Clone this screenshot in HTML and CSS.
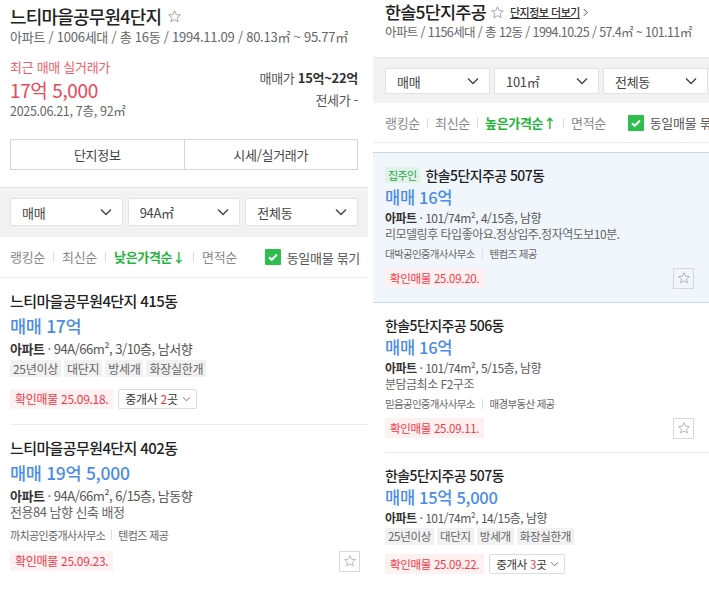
FILE: index.html
```html
<!DOCTYPE html>
<html lang="ko">
<head>
<meta charset="utf-8">
<title>단지 매물</title>
<link rel="stylesheet" href="styles.css">
</head>
<body>
<svg width="0" height="0" class="defs">
  <defs>
    <symbol id="star" viewBox="0 0 24 24"><path d="M12 2.8l2.7 6.1 6.6.6-5 4.4 1.5 6.5L12 17l-5.8 3.4 1.5-6.5-5-4.4 6.6-.6z" fill="none" stroke="currentColor" stroke-width="1.4" stroke-linejoin="round"/></symbol>
    <symbol id="chev" viewBox="0 0 12 8"><path d="M1 1.5l5 5 5-5" fill="none" stroke="currentColor" stroke-width="1.4"/></symbol>
    <symbol id="chev-s" viewBox="0 0 10 6"><path d="M1 1l4 4 4-4" fill="none" stroke="currentColor" stroke-width="1"/></symbol>
  </defs>
</svg>
<div class="page">
  <section class="panel panel-left">
    <header class="cx-head">
      <h1 class="cx-title">느티마을공무원4단지 <svg class="title-star"><use href="#star"/></svg></h1>
      <p class="cx-sub">아파트 / 1006세대 / 총 16동 / 1994.11.09 / 80.13㎡ ~ 95.77㎡</p>
      <div class="cx-price">
        <div class="recent">
          <p class="recent-label">최근 매매 실거래가</p>
          <p class="recent-value">17억 5,000</p>
          <p class="recent-meta">2025.06.21, 7층, 92㎡</p>
        </div>
        <div class="range">
          <p class="range-row">매매가 <b>15억~22억</b></p>
          <p class="range-row">전세가 -</p>
        </div>
      </div>
      <div class="tabs"><span class="tab">단지정보</span><span class="tab">시세/실거래가</span></div>
    </header>
    <div class="filters">
      <div class="select">매매<svg class="chev"><use href="#chev"/></svg></div>
      <div class="select">94A㎡<svg class="chev"><use href="#chev"/></svg></div>
      <div class="select">전체동<svg class="chev"><use href="#chev"/></svg></div>
    </div>
    <div class="sort">
      <span class="sort-item">랭킹순</span><i class="sep"></i>
      <span class="sort-item">최신순</span><i class="sep"></i>
      <span class="sort-item active">낮은가격순↓</span><i class="sep"></i>
      <span class="sort-item">면적순</span>
      <label class="check"><span class="box"><svg viewBox="0 0 16 16"><path d="M4 8.2l2.7 2.6L12 5.5" fill="none" stroke="#fff" stroke-width="2"/></svg></span>동일매물 묶기</label>
    </div>
    <ul class="list">
      <li class="item">
        <p class="item-title">느티마을공무원4단지 415동</p>
        <p class="item-price">매매 17억</p>
        <p class="item-info"><b>아파트</b> · 94A/66m², 3/10층, 남서향</p>
        <p class="tags"><span class="tag">25년이상</span><span class="tag">대단지</span><span class="tag">방세개</span><span class="tag">화장실한개</span></p>
        <div class="item-foot"><span class="badge">확인매물 25.09.18.</span><span class="broker">중개사 <em>2</em>곳<svg class="chev-s"><use href="#chev-s"/></svg></span></div>
      </li>
      <li class="item">
        <p class="item-title">느티마을공무원4단지 402동</p>
        <p class="item-price">매매 19억 5,000</p>
        <p class="item-info"><b>아파트</b> · 94A/66m², 6/15층, 남동향</p>
        <p class="item-desc">전용84 남향 신축 배정</p>
        <p class="item-agent">까치공인중개사사무소<i class="sep"></i>텐컴즈 제공</p>
        <div class="item-foot"><span class="badge">확인매물 25.09.23.</span><span class="fav"><svg><use href="#star"/></svg></span></div>
      </li>
    </ul>
  </section>

  <section class="panel panel-right">
    <header class="cx-head">
      <h1 class="cx-title">한솔5단지주공 <svg class="title-star"><use href="#star"/></svg><a class="more">단지정보 더보기<svg class="more-chev" viewBox="0 0 6 10"><path d="M1 1l4 4-4 4" fill="none" stroke="currentColor" stroke-width="1.1"/></svg></a></h1>
      <p class="cx-sub">아파트 / 1156세대 / 총 12동 / 1994.10.25 / 57.4㎡ ~ 101.11㎡</p>
    </header>
    <div class="filters">
      <div class="select">매매<svg class="chev"><use href="#chev"/></svg></div>
      <div class="select">101㎡<svg class="chev"><use href="#chev"/></svg></div>
      <div class="select">전체동<svg class="chev"><use href="#chev"/></svg></div>
    </div>
    <div class="sort">
      <span class="sort-item">랭킹순</span><i class="sep"></i>
      <span class="sort-item">최신순</span><i class="sep"></i>
      <span class="sort-item active">높은가격순↑</span><i class="sep"></i>
      <span class="sort-item">면적순</span>
      <label class="check"><span class="box"><svg viewBox="0 0 16 16"><path d="M4 8.2l2.7 2.6L12 5.5" fill="none" stroke="#fff" stroke-width="2"/></svg></span>동일매물 묶기</label>
    </div>
    <ul class="list">
      <li class="item item-owner">
        <p class="item-title"><span class="owner">집주인</span>한솔5단지주공 507동</p>
        <p class="item-price">매매 16억</p>
        <p class="item-info"><b>아파트</b> · 101/74m², 4/15층, 남향</p>
        <p class="item-desc">리모델링후 타입좋아요.정상입주.정자역도보10분.</p>
        <p class="item-agent">대박공인중개사사무소<i class="sep"></i>텐컴즈 제공</p>
        <div class="item-foot"><span class="badge">확인매물 25.09.20.</span><span class="fav"><svg><use href="#star"/></svg></span></div>
      </li>
      <li class="item">
        <p class="item-title">한솔5단지주공 506동</p>
        <p class="item-price">매매 16억</p>
        <p class="item-info"><b>아파트</b> · 101/74m², 5/15층, 남향</p>
        <p class="item-desc">분담금최소 F2구조</p>
        <p class="item-agent">믿음공인중개사사무소<i class="sep"></i>매경부동산 제공</p>
        <div class="item-foot"><span class="badge">확인매물 25.09.11.</span><span class="fav"><svg><use href="#star"/></svg></span></div>
      </li>
      <li class="item">
        <p class="item-title">한솔5단지주공 507동</p>
        <p class="item-price">매매 15억 5,000</p>
        <p class="item-info"><b>아파트</b> · 101/74m², 14/15층, 남향</p>
        <p class="tags"><span class="tag">25년이상</span><span class="tag">대단지</span><span class="tag">방세개</span><span class="tag">화장실한개</span></p>
        <div class="item-foot"><span class="badge">확인매물 25.09.22.</span><span class="broker">중개사 <em>3</em>곳<svg class="chev-s"><use href="#chev-s"/></svg></span></div>
      </li>
    </ul>
  </section>
</div>
</body>
</html>
```

FILE: styles.css
```css
* { box-sizing: border-box; }
html, body { margin: 0; padding: 0; background: #fff; }
body {
  font-family: "Noto Sans CJK KR", "Noto Sans", sans-serif;
  color: #222;
  font-size: 13px;
  letter-spacing: -0.3px;
}
p, h1, ul { margin: 0; padding: 0; }
ul { list-style: none; }
.defs { position: absolute; width: 0; height: 0; overflow: hidden; }

.page {
  display: flex;
  gap: 5px;
  width: 709px;
  height: 591px;
  overflow: hidden;
}
.panel { flex: none; overflow: hidden; }
.panel-left { width: 368px; }
.panel-right { width: 336px; }

/* header */
.cx-head { padding: 0 10px; }
.cx-title {
  display: flex;
  align-items: center;
  height: 28px;
  padding-top: 4px;
  font-size: 18px;
  font-weight: 500;
  line-height: 24px;
  letter-spacing: -0.8px;
  color: #222;
}
.title-star { width: 15px; height: 15px; color: #999; margin-left: 6px; flex: none; }
.cx-sub {
  font-size: 13px;
  color: #666;
  line-height: 18px;
  letter-spacing: -0.25px;
}
.cx-price {
  display: flex;
  justify-content: space-between;
  margin-top: 12px;
}
.recent-label { color: #f0606c; font-size: 13px; line-height: 18px; }
.recent-value { color: #ec4657; font-size: 19px; line-height: 24px; margin-top: 2px; letter-spacing: -0.4px; }
.recent-meta { color: #666; font-size: 12.5px; line-height: 18px; }
.range { text-align: right; padding-top: 11px; }
.range-row { font-size: 13px; color: #555; line-height: 18px; margin-bottom: 4px; }
.range-row b { font-weight: 700; color: #333; }
.tabs {
  display: flex;
  margin-top: 19px;
  border: 1px solid #d6d6d6;
  height: 31px;
}
.tab {
  flex: 1;
  display: flex;
  align-items: center;
  justify-content: center;
  font-size: 13px;
  color: #444;
}
.tab + .tab { border-left: 1px solid #d6d6d6; }

/* filters */
.filters {
  display: flex;
  gap: 5px;
  background: #f2f2f2;
  border-top: 1px solid #e6e6e6;
  padding: 10px 10px 11px;
  margin-top: 17px;
}
.select {
  flex: 1;
  height: 28px;
  background: #fff;
  border: 1px solid #e2e2e2;
  display: flex;
  align-items: center;
  justify-content: space-between;
  padding: 0 10px 0 11px;
  font-size: 13px;
  color: #444;
}
.chev { width: 12px; height: 8px; color: #444; flex: none; }

/* sort */
.sort {
  display: flex;
  align-items: center;
  height: 41px;
  padding: 0 8px 0 10px;
  border-bottom: 1px solid #ececec;
  font-size: 13px;
  color: #888;
}
.sort-item { line-height: 18px; white-space: nowrap; }
.sort-item.active { color: #22b43c; font-weight: 700; }
.sep {
  display: inline-block;
  flex: none;
  width: 1px;
  height: 10px;
  background: #ddd;
  margin: 0 8px;
}
.check {
  margin-left: auto;
  display: flex;
  align-items: center;
  color: #555;
  white-space: nowrap;
}
.box {
  width: 16px;
  height: 16px;
  background: #2dbe4e;
  border-radius: 1px;
  margin-right: 6px;
  display: flex;
  flex: none;
}
.box svg { width: 16px; height: 16px; }

/* items */
.item {
  margin-left: 10px;
  padding: 13px 8px 14px 0;
  border-bottom: 1px solid #ececec;
}
.item:last-child { border-bottom: 0; }
.item-title {
  display: flex;
  align-items: center;
  font-size: 15px;
  font-weight: 500;
  line-height: 20px;
  letter-spacing: -0.6px;
  color: #222;
}
.item-price {
  color: #4b8ce8;
  font-size: 17.5px;
  font-weight: 500;
  line-height: 24px;
  margin-top: 3px;
  letter-spacing: -0.3px;
}
.item-info {
  font-size: 13px;
  color: #555;
  line-height: 16px;
  margin-top: 3px;
  letter-spacing: -0.5px;
}
.item-info b { font-weight: 700; color: #333; }
.item-desc { font-size: 13px; color: #666; line-height: 16px; letter-spacing: -0.5px; }
.item-agent {
  display: flex;
  align-items: center;
  font-size: 11px;
  color: #666;
  line-height: 16px;
  margin-top: 7px;
  letter-spacing: -0.6px;
}
.item-agent .sep { margin: 0 6px; }
.tags { display: flex; align-items: flex-start; gap: 3px; margin-top: 3px; height: 18px; }
.tag {
  background: #f1f1f1;
  color: #666;
  font-size: 12px;
  line-height: 17px;
  padding: 0 3px;
}
.item-foot {
  display: flex;
  align-items: center;
  gap: 5px;
  margin-top: 7px;
  height: 22px;
}
.tags + .item-foot { margin-top: 10px; }
.badge {
  background: #fff0f1;
  color: #f03a4a;
  font-size: 12px;
  line-height: 20px;
  padding: 0 5px;
  letter-spacing: -0.3px;
}
.broker {
  display: inline-block;
  height: 20px;
  line-height: 18px;
  border: 1px solid #dcdcdc;
  border-radius: 2px;
  padding: 0 5px 0 6px;
  font-size: 12px;
  color: #333;
  white-space: nowrap;
}
.broker em { font-style: normal; color: #f03a4a; }
.chev-s { width: 9px; height: 6px; color: #666; margin-left: 4px; vertical-align: 2px; }
.fav {
  margin-left: auto;
  width: 21px;
  height: 21px;
  border: 1px solid #d8d8d8;
  display: flex;
  align-items: center;
  justify-content: center;
  color: #aaa;
}
.fav svg { width: 14px; height: 14px; }

/* right panel variants */
.panel-right .cx-head { padding: 0 12px; }
.panel-right .cx-title { padding-top: 1px; height: 23px; line-height: 22px; font-size: 17.5px; }
.panel-right .title-star { margin-left: 4px; }
.more {
  display: flex;
  align-items: center;
  font-size: 11px;
  font-weight: 500;
  color: #333;
  text-decoration: underline;
  margin-left: 5px;
  letter-spacing: -0.5px;
}
.more-chev { width: 5px; height: 9px; margin-left: 3px; }
.panel-right .cx-sub { font-size: 12.5px; letter-spacing: -0.6px; }
.panel-right .filters { margin-top: 16px; gap: 4px; padding: 10px 0 9px 12px; width: 348px; }
.panel-right .select { flex: none; width: 105px; height: 26px; }
.panel-right .sort { padding: 0 0 0 12px; width: 350px; height: 40px; }
.panel-right .sep { margin: 0 7px; }
.panel-right .list { margin-top: 9px; }
.panel-right .item { margin-left: 12px; padding: 12px 15px 13px 0; }
.panel-right .item-title { font-size: 14px; letter-spacing: -0.6px; }
.panel-right .item-price { font-size: 16.5px; margin-top: 0; }
.panel-right .item-info { font-size: 12px; margin-top: 1px; }
.panel-right .item-desc { font-size: 12px; }
.panel-right .item-agent { font-size: 10.5px; margin-top: 4px; letter-spacing: -0.7px; }
.panel-right .item-foot { margin-top: 5px; }
.panel-right .tags { margin-top: 2px; }
.panel-right .tags + .item-foot { margin-top: 7px; }
.panel-right .tag { font-size: 11.5px; }
.panel-right .badge { font-size: 11.5px; }
.panel-right .broker { font-size: 11.5px; }
.panel-right .item-owner {
  margin-left: 0;
  padding-left: 12px;
  background: #f1f6fc;
  border-top: 1px solid #c7dbf0;
  border-bottom: 1px solid #c7dbf0;
}
.owner {
  font-size: 11px;
  color: #2aa550;
  background: #e1f3e6;
  padding: 0 3px;
  line-height: 16px;
  margin-right: 6px;
  font-weight: 400;
}
```
